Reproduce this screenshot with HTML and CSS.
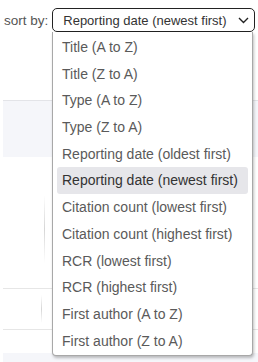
FILE: index.html
```html
<!DOCTYPE html>
<html>
    <head>
        <title>Sort</title>
        <link rel="stylesheet" href="styles.css">
    </head>
    <body>
        <div class="toolbar">
            <span class="label">sort by:</span>
            <div class="select">
                <span>Reporting date (newest first)</span>
                <svg class="chevron" width="11" height="7" viewBox="0 0 11 7"><path d="M1 1 L5.5 5.5 L10 1" fill="none" stroke="#222" stroke-width="1.4"/></svg>
            </div>
        </div>

<!----- PAGE BEHIND ----->
        <div class="page">
            <div class="panel"></div>
            <div class="rowA"><div class="vline tall"></div></div>
            <div class="rowB"><div class="vline short"></div></div>
            <div class="rowC"></div>
            <div class="panel bottom"></div>
        </div>

<!----- DROPDOWN ----->
        <ul class="options">
            <li>Title (A to Z)</li>
            <li>Title (Z to A)</li>
            <li>Type (A to Z)</li>
            <li>Type (Z to A)</li>
            <li>Reporting date (oldest first)</li>
            <li class="selected">Reporting date (newest first)</li>
            <li>Citation count (lowest first)</li>
            <li>Citation count (highest first)</li>
            <li>RCR (lowest first)</li>
            <li>RCR (highest first)</li>
            <li>First author (A to Z)</li>
            <li>First author (Z to A)</li>
        </ul>
    </body>
</html>
```

FILE: styles.css
```css
body{
    margin: 0;
    font-family: "Liberation Sans", Arial, sans-serif;
    background: #fff;
    overflow: hidden;
}
.toolbar{
    display: flex;
    align-items: center;
    gap: 4px;
    padding: 8px 0 0 4px;
    height: 24px;
}
.label{
    flex-shrink: 0;
    white-space: nowrap;
    font-size: 13.5px;
    color: #555;
}
.select{
    flex-shrink: 0;
    display: flex;
    align-items: center;
    justify-content: space-between;
    box-sizing: border-box;
    width: 203px;
    height: 24px;
    padding: 0 5px 0 10px;
    border: 1px solid #222;
    border-radius: 5px;
    font-size: 13px;
    color: #333;
    white-space: nowrap;
}
.chevron{
    margin-top: 1px;
}

/*----- PAGE BEHIND -----*/
.page{
    padding-left: 3px;
    margin-top: 68px;
}
.panel{
    height: 56px;
    background: #f5f6fa;
    border-top: 1px solid #e3e4e8;
}
.rowA{
    height: 131px;
    border-bottom: 1px solid #e6e6e6;
    position: relative;
}
.rowB{
    height: 40px;
    border-bottom: 1px solid #e6e6e6;
    position: relative;
}
.rowC{
    height: 23px;
}
.panel.bottom{
    border-top: none;
    height: 20px;
}
.vline{
    position: absolute;
    width: 1px;
    background: linear-gradient(#fff, #d6d6d6 50%, #fff);
}
.vline.tall{
    left: 41px;
    top: 38px;
    height: 68px;
}
.vline.short{
    left: 38px;
    top: 6px;
    height: 28px;
}

/*----- DROPDOWN -----*/
.options{
    position: absolute;
    left: 52px;
    top: 32px;
    width: 201px;
    margin: 0;
    padding: 2px 4px 1px 4px;
    box-sizing: border-box;
    list-style: none;
    background: #fff;
    border: 1px solid #a8a8a8;
    border-top: none;
    border-radius: 0 0 4px 4px;
    box-shadow: 1px 2px 3px rgba(0,0,0,0.25);
}
.options li{
    height: 26.7px;
    line-height: 26.7px;
    padding-left: 5px;
    font-size: 14px;
    color: #5a5a5a;
    white-space: nowrap;
}
.options li.selected{
    background: #e6e6ea;
    border-radius: 3px;
    color: #333;
}
```
